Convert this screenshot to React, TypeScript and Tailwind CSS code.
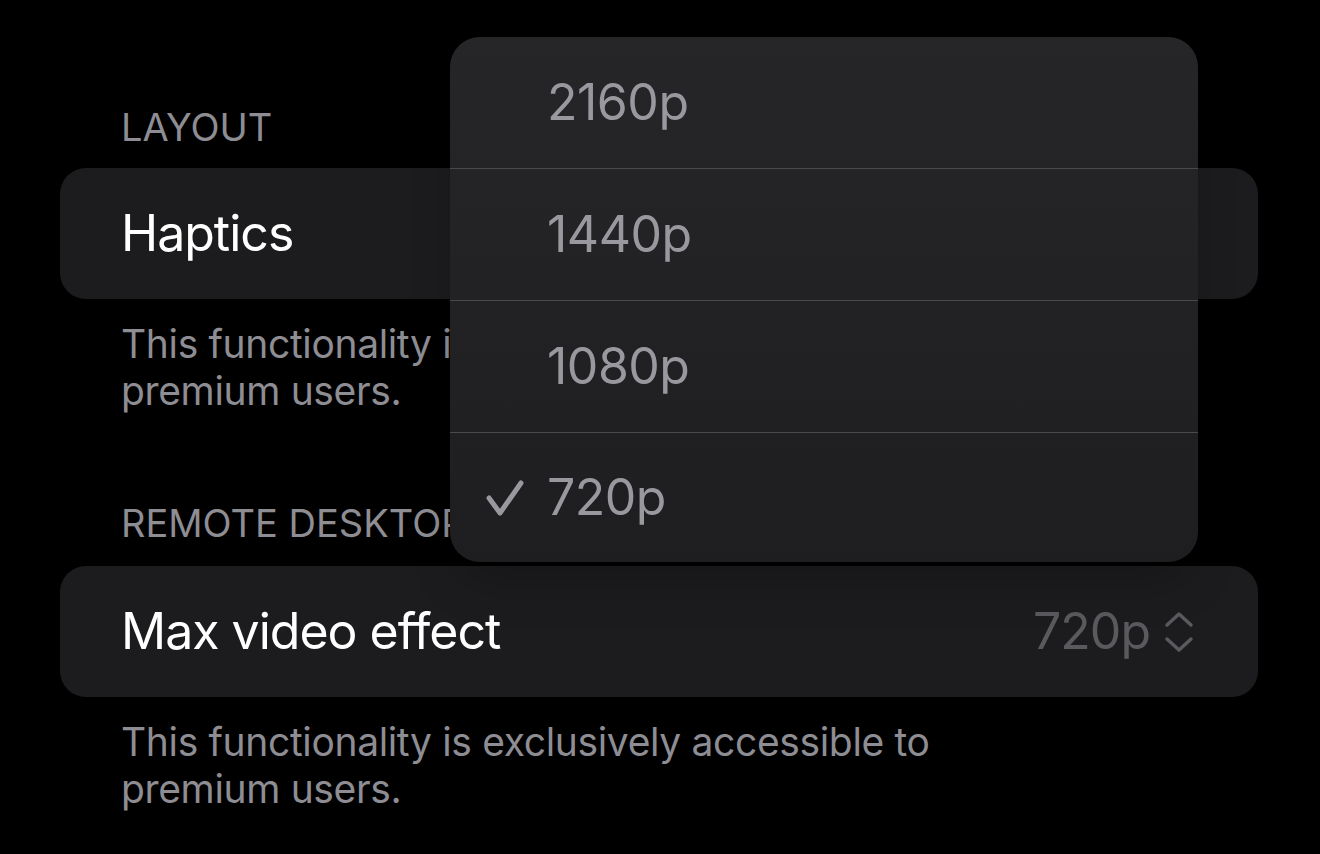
import React from "react";

const options = [
  { label: "2160p", h: "h-[131px]" },
  { label: "1440p", h: "h-[132px]" },
  { label: "1080p", h: "h-[132px]" },
  { label: "720p", h: "h-[130px]" },
];

const Footer = () => (
  <p className="mt-[21px] max-w-[880px] pl-[61px] text-[39px] leading-[47px] tracking-[-0.35px] text-[#8d8d93]">
    This functionality is exclusively accessible to premium users.
  </p>
);

const App: React.FC = () => {
  const selected = "720p";

  return (
    <div className="relative h-[854px] w-[1320px] overflow-hidden bg-black font-['Inter',sans-serif] antialiased">
      <div className="pl-[60px] pr-[62px] pt-[104px]">
        <h3 className="pl-[61px] text-[38px] leading-[46px] text-[#8d8d93]">LAYOUT</h3>
        <div className="mt-[18px] flex h-[131px] items-center rounded-[26px] bg-[#1c1c1e] px-[61px]">
          <span className="text-[50px] tracking-[-1px] text-white">Haptics</span>
        </div>
        <Footer />

        <h3 className="mt-[86px] pl-[61px] text-[38px] leading-[46px] text-[#8d8d93]">
          REMOTE DESKTOP
        </h3>
        <div className="mt-[20px] flex h-[131px] items-center justify-between rounded-[26px] bg-[#1c1c1e] pl-[61px] pr-[64px]">
          <span className="text-[50px] tracking-[-1px] text-white">Max video effect</span>
          <div className="flex items-center gap-[14px]">
            <span className="text-[50px] tracking-[-1px] text-[#5a5a5e]">720p</span>
            <svg width="30" height="42" viewBox="0 0 30 42" fill="none" stroke="#5a5a5e" strokeWidth="3.5" strokeLinecap="round" strokeLinejoin="round">
              <polyline points="3,14 15,3 27,14" />
              <polyline points="3,28 15,39 27,28" />
            </svg>
          </div>
        </div>
        <Footer />
      </div>

      {/* open picker menu */}
      <div className="absolute left-[450px] top-[37px] w-[748px] overflow-hidden rounded-[30px] bg-gradient-to-b from-[#262628] to-[#1e1e20] shadow-2xl">
        {options.map((o, i) => (
          <div
            key={o.label}
            className={
              "flex items-center pl-[36px] " +
              o.h +
              (i > 0 ? " border-t border-[#4a4a4d]" : "")
            }
          >
            <div className="flex w-[61px] items-center">
              {o.label === selected && (
                <svg width="38" height="36" viewBox="0 0 38 36" fill="none" stroke="#98989e" strokeWidth="5" strokeLinecap="round" strokeLinejoin="round">
                  <polyline points="3,18 14,33 35,3" />
                </svg>
              )}
            </div>
            <span className="text-[50px] tracking-[-0.5px] text-[#98989e]">{o.label}</span>
          </div>
        ))}
      </div>
    </div>
  );
};

export default App;
